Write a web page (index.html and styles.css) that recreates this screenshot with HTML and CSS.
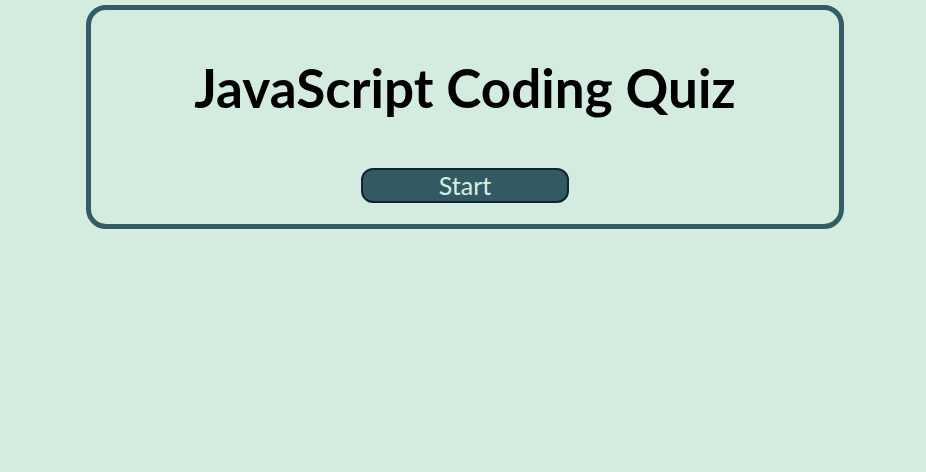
FILE: index.html
```html
<!DOCTYPE html>
<html lang="en">
<head>
<meta charset="utf-8">
<title>JavaScript Coding Quiz</title>
<link rel="stylesheet" href="styles.css">
</head>
<body>
<main class="card">
  <h1 class="title">JavaScript Coding Quiz</h1>
  <button class="start-btn" type="button">Start</button>
</main>
</body>
</html>
```

FILE: styles.css
```css
html, body {
  margin: 0;
  padding: 0;
}
body {
  background: #d4ebdf;
  font-family: "Gill Sans", "Lato", "Open Sans", sans-serif;
  padding: 5px 0 0 4px;
}
.card {
  box-sizing: border-box;
  width: 758px;
  height: 224px;
  margin: 0 auto;
  border: 5px solid #335c66;
  border-radius: 20px;
  display: flex;
  flex-direction: column;
  align-items: center;
  padding-top: 48px;
}
.title {
  margin: 0;
  font-size: 53px;
  font-weight: 700;
  color: #000;
  line-height: 60px;
}
.start-btn {
  margin-top: 50px;
  width: 208px;
  height: 35px;
  background: #335a63;
  color: #d4f0e3;
  border: 2px solid #0f2533;
  border-radius: 12px;
  font-family: "Gill Sans", "Lato", sans-serif;
  font-size: 25px;
  padding: 0;
  line-height: 1;
}
```
